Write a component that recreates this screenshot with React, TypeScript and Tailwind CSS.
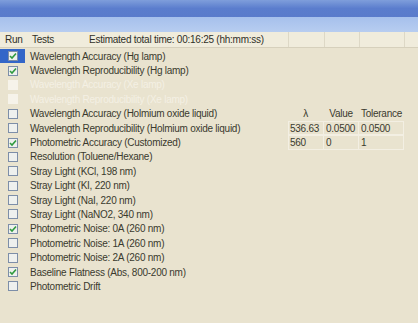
import React from 'react';

// ---------------------------------------------------------------------------
// Data
// ---------------------------------------------------------------------------

type Row = {
  name: string;
  checked: boolean;
  disabled?: boolean;
  selected?: boolean;
};

const rows: Row[] = [
  { name: 'Wavelength Accuracy (Hg lamp)', checked: true, selected: true },
  { name: 'Wavelength Reproducibility (Hg lamp)', checked: true },
  { name: 'Wavelength Accuracy (Xe lamp)', checked: false, disabled: true },
  { name: 'Wavelength Reproducibility (Xe lamp)', checked: false, disabled: true },
  { name: 'Wavelength Accuracy (Holmium oxide liquid)', checked: false },
  { name: 'Wavelength Reproducibility (Holmium oxide liquid)', checked: false },
  { name: 'Photometric Accuracy (Customized)', checked: true },
  { name: 'Resolution (Toluene/Hexane)', checked: false },
  { name: 'Stray Light (KCl, 198 nm)', checked: false },
  { name: 'Stray Light (KI, 220 nm)', checked: false },
  { name: 'Stray Light (NaI, 220 nm)', checked: false },
  { name: 'Stray Light (NaNO2, 340 nm)', checked: false },
  { name: 'Photometric Noise: 0A (260 nm)', checked: true },
  { name: 'Photometric Noise: 1A (260 nm)', checked: false },
  { name: 'Photometric Noise: 2A (260 nm)', checked: false },
  { name: 'Baseline Flatness (Abs, 800-200 nm)', checked: true },
  { name: 'Photometric Drift', checked: false },
];

// ---------------------------------------------------------------------------
// Checkbox
// ---------------------------------------------------------------------------

function Check({ checked, disabled }: { checked: boolean; disabled?: boolean }) {
  if (disabled) {
    return <div className="h-[10px] w-[10px] bg-[#f6f3ea]" />;
  }
  return (
    <div className="flex h-[10px] w-[10px] items-center justify-center border border-[#7d8ea8] bg-[#eef0ee]">
      {checked && (
        <svg width="8" height="8" viewBox="0 0 8 8">
          <path d="M1 4 L3 6 L7 1.5" fill="none" stroke="#2f9a3e" strokeWidth="1.6" />
        </svg>
      )}
    </div>
  );
}

// ---------------------------------------------------------------------------
// App
// ---------------------------------------------------------------------------

export default function App() {
  return (
    <div
      className="flex h-[323px] w-[418px] flex-col overflow-hidden bg-[#e9e3cf] text-[10px] tracking-[-0.25px] text-[#3a3a2e]"
      style={{ fontFamily: '"Liberation Sans", Arial, sans-serif' }}
    >
      {/* Title bars */}
      <div className="h-[17px] bg-gradient-to-b from-[#7f9edb] via-[#5b7dcd] to-[#5a7bcb]" />
      <div className="h-[15px] bg-gradient-to-b from-[#a6c0ec] to-[#b7cdf0]" />

      {/* Header */}
      <div className="flex h-[16px] items-center whitespace-nowrap border-b border-[#d6d0bc] bg-[#f0ecdc] text-[#2f2f28]">
        <span className="w-[30px] pl-[5px]">Run</span>
        <span className="w-[59px] pl-[2px]">Tests</span>
        <span className="w-[199px]">Estimated total time: 00:16:25 (hh:mm:ss)</span>
        <span className="h-full w-[36px] border-l border-[#ddd8c6]" />
        <span className="h-full w-[35px] border-l border-[#ddd8c6]" />
        <span className="h-full w-[45px] border-l border-[#ddd8c6]" />
        <span className="h-full flex-1 border-l border-[#ddd8c6]" />
      </div>

      {/* Rows */}
      <div className="flex flex-col pt-[1px]">
        {rows.map((r, i) => (
          <div key={r.name} className="flex h-[14.4px] items-center">
            <div
              className={`flex h-full w-[25px] items-center justify-center ${
                r.selected ? 'bg-[#3366c8]' : ''
              }`}
            >
              <Check checked={r.checked} disabled={r.disabled} />
            </div>
            <span
              className={`w-[263px] whitespace-nowrap pl-[5px] ${
                r.disabled ? 'text-[#f4f0e4]' : ''
              }`}
            >
              {r.name}
            </span>
            {i === 4 && (
              <div className="flex h-full items-center">
                <span className="w-[35px] text-center">λ</span>
                <span className="w-[36px] text-center">Value</span>
                <span className="w-[45px] text-center">Tolerance</span>
              </div>
            )}
            {i === 5 && <ParamRow a="536.63" b="0.0500" c="0.0500" />}
            {i === 6 && <ParamRow a="560" b="0" c="1" />}
          </div>
        ))}
      </div>
    </div>
  );
}

function ParamRow({ a, b, c }: { a: string; b: string; c: string }) {
  return (
    <div className="flex h-full">
      <span className="flex w-[36px] items-center border border-[#f3efe3] pl-[1px]">{a}</span>
      <span className="flex w-[35px] items-center border border-l-0 border-[#f3efe3] pl-[2px]">{b}</span>
      <span className="flex w-[45px] items-center border border-l-0 border-[#f3efe3] pl-[2px]">{c}</span>
    </div>
  );
}
